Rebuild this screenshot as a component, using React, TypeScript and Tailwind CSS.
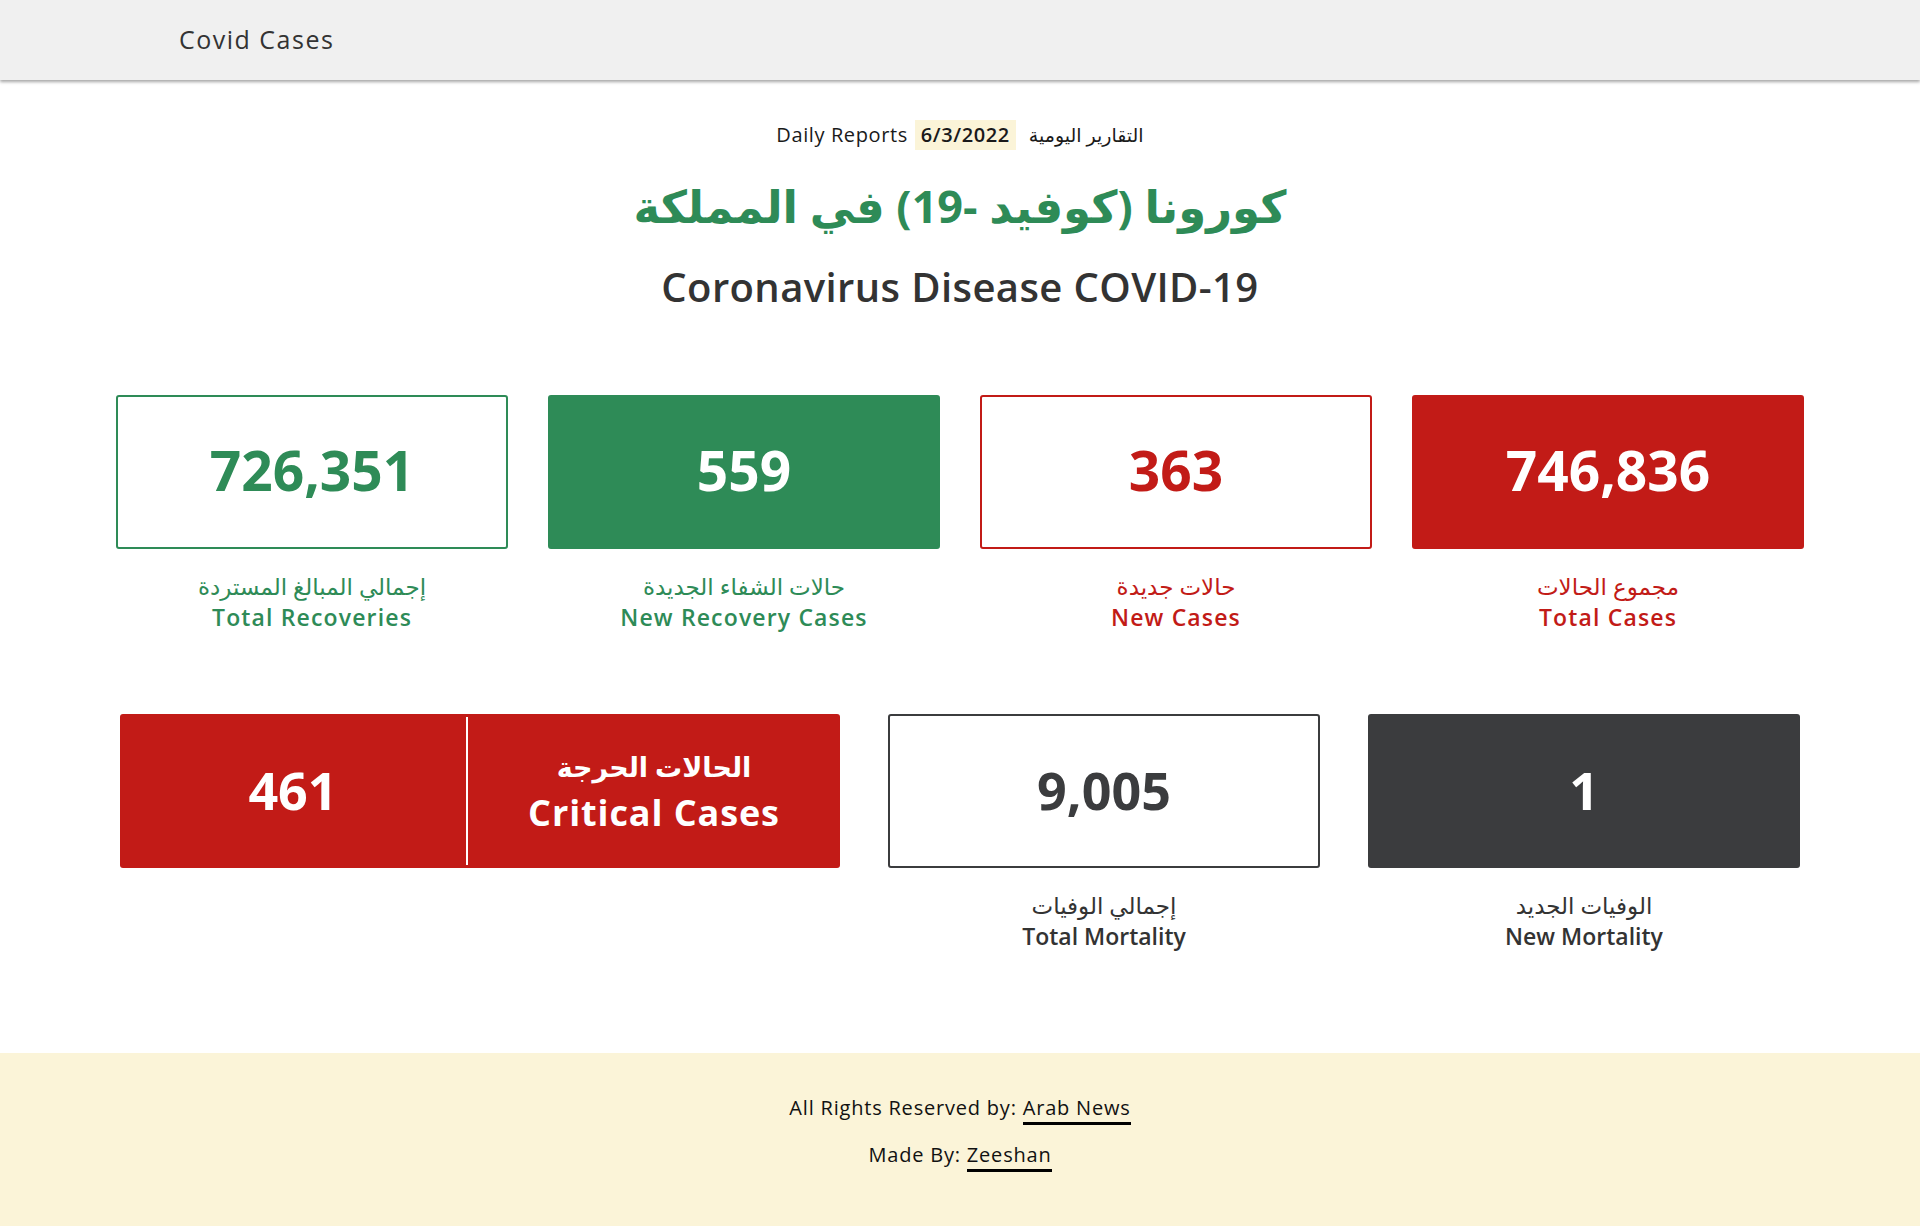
import React from "react";

type Stat = {
  value: string;
  ar: string;
  en: string;
  box: string;
  label: string;
};

const topStats: Stat[] = [
  {
    value: "726,351",
    ar: "إجمالي المبالغ المستردة",
    en: "Total Recoveries",
    box: "border-2 border-[#2e8b57] bg-white text-[#2e8b57]",
    label: "text-[#2e8b57]",
  },
  {
    value: "559",
    ar: "حالات الشفاء الجديدة",
    en: "New Recovery Cases",
    box: "border-2 border-[#2e8b57] bg-[#2e8b57] text-white",
    label: "text-[#2e8b57]",
  },
  {
    value: "363",
    ar: "حالات جديدة",
    en: "New Cases",
    box: "border-2 border-[#c21b17] bg-white text-[#c21b17]",
    label: "text-[#c21b17]",
  },
  {
    value: "746,836",
    ar: "مجموع الحالات",
    en: "Total Cases",
    box: "border-2 border-[#c21b17] bg-[#c21b17] text-white",
    label: "text-[#c21b17]",
  },
];

const StatCard = ({ stat }: { stat: Stat }) => {
  return (
    <div className="flex flex-col items-center">
      <div
        className={`w-full h-[154px] rounded-[3px] flex items-center justify-center text-[55px] font-bold pb-[3px] ${stat.box}`}
      >
        {stat.value}
      </div>
      <p className={`mt-[22px] text-[23px] leading-[31px] font-normal ${stat.label}`}>{stat.ar}</p>
      <p className={`text-[23px] leading-[31px] font-semibold tracking-wider ${stat.label}`}>{stat.en}</p>
    </div>
  );
};

export default function App() {
  return (
    <div
      className="min-h-screen bg-white text-[#333]"
      style={{ fontFamily: '"Open Sans", "Noto Sans", "DejaVu Sans", sans-serif' }}
    >
      {/* navbar */}
      <header className="h-[80px] bg-[#f0f0f0] flex items-center pl-[179px] shadow-[0_2px_3px_rgba(0,0,0,0.35)] relative z-10">
        <span className="text-[25px] text-[#333] tracking-[0.06em]">Covid Cases</span>
      </header>

      <main className="pt-[40px] flex flex-col items-center">
        <div className="flex items-center text-[20px] leading-[30px] text-[#1a1a1a] tracking-[0.03em]">
          <span>Daily Reports</span>
          <span className="ml-[7px] px-[6px] bg-[#fbf4d8] font-semibold">6/3/2022</span>
          <span className="ml-[13px] text-[19px]">التقارير اليومية</span>
        </div>

        <h1 className="mt-[26px] text-[45px] leading-[60px] font-bold text-[#2e8b57]" dir="rtl">
          كورونا (كوفيد -19) في المملكة
        </h1>
        <h2 className="mt-[27px] text-[40px] leading-[48px] font-semibold text-[#333] tracking-[0.01em]">
          Coronavirus Disease COVID-19
        </h2>

        {/* first row */}
        <section className="mt-[84px] w-[1688px] grid grid-cols-4 gap-[40px]">
          {topStats.map((s) => (
            <StatCard key={s.en} stat={s} />
          ))}
        </section>

        {/* second row */}
        <section className="mt-[81px] w-[1680px] grid grid-cols-[720px_432px_432px] gap-[48px]">
          <div className="h-[154px] rounded-[3px] bg-[#c21b17] text-white flex">
            <div className="w-[346px] flex items-center justify-center text-[52px] font-bold pb-[3px]">461</div>
            <div className="w-[2px] bg-white my-[3px]" />
            <div className="flex-1 flex flex-col items-center justify-center">
              <span className="text-[27px] leading-[44px] font-bold">الحالات الحرجة</span>
              <span className="text-[36px] leading-[48px] font-bold tracking-wide">Critical Cases</span>
            </div>
          </div>

          <div className="flex flex-col items-center">
            <div className="w-full h-[154px] rounded-[3px] border-2 border-[#3b3c3e] bg-white text-[#3b3c3e] flex items-center justify-center text-[52px] font-bold pb-[3px]">
              9,005
            </div>
            <p className="mt-[22px] text-[23px] leading-[31px] text-[#333]">إجمالي الوفيات</p>
            <p className="text-[23px] leading-[31px] font-semibold text-[#333]">Total Mortality</p>
          </div>

          <div className="flex flex-col items-center">
            <div className="w-full h-[154px] rounded-[3px] bg-[#3b3c3e] text-white flex items-center justify-center text-[52px] font-bold pb-[3px]">
              1
            </div>
            <p className="mt-[22px] text-[23px] leading-[31px] text-[#333]">الوفيات الجديد</p>
            <p className="text-[23px] leading-[31px] font-semibold text-[#333]">New Mortality</p>
          </div>
        </section>
      </main>

      {/* footer */}
      <footer className="mt-[101px] bg-[#fbf4d8] pt-[40px] pb-[56px] flex flex-col items-center text-[20px] leading-[30px] text-[#111] tracking-[0.04em]">
        <p>
          All Rights Reserved by:{" "}
          <a href="#" className="border-b-[3px] border-black pb-[1px]">
            Arab News
          </a>
        </p>
        <p className="mt-[17px]">
          Made By:{" "}
          <a href="#" className="border-b-[3px] border-black pb-[1px]">
            Zeeshan
          </a>
        </p>
      </footer>
    </div>
  );
}
